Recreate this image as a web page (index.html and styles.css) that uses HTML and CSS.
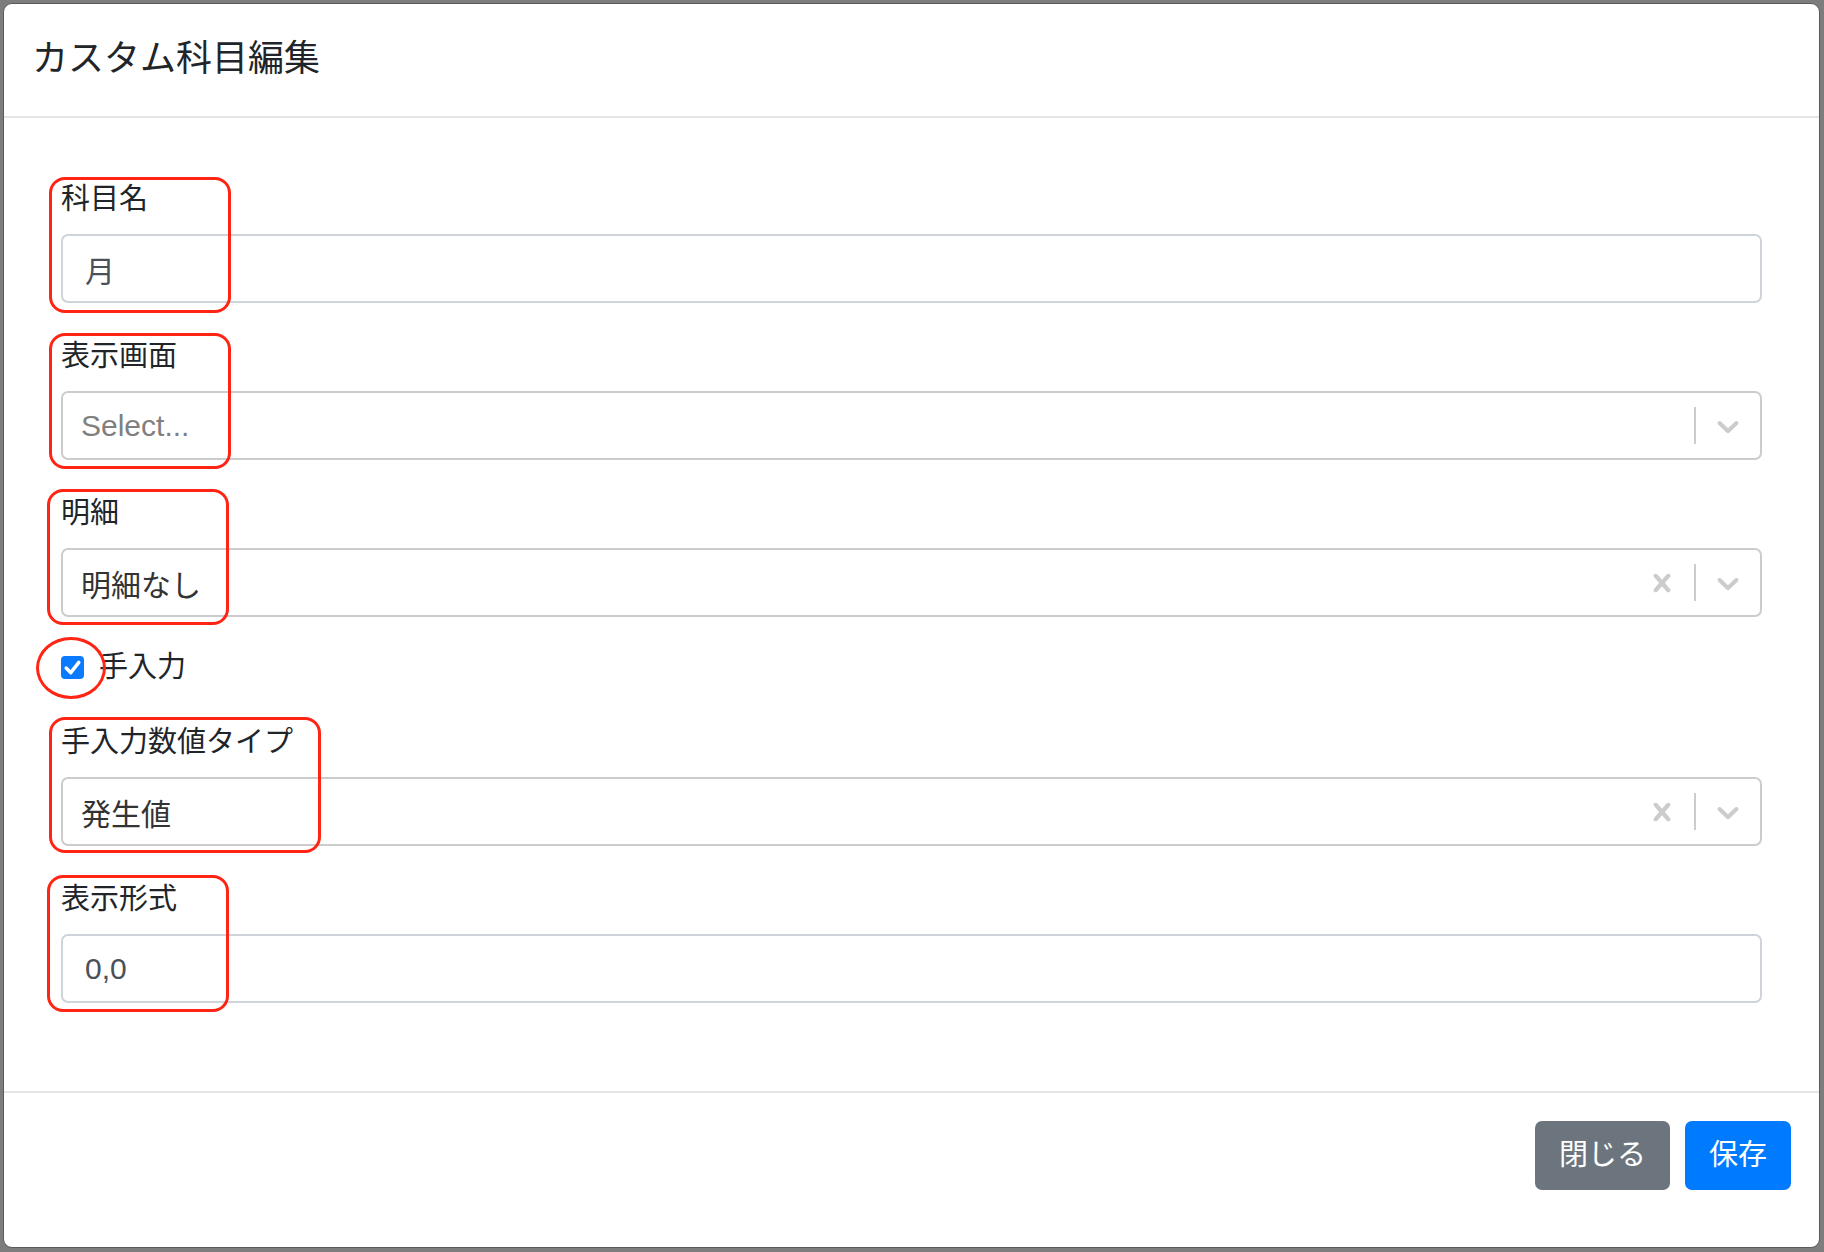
FILE: index.html
```html
<!DOCTYPE html>
<html lang="ja">
<head>
    <meta charset="UTF-8" />
    <title>カスタム科目編集</title>
    <link rel="stylesheet" href="styles.css">
</head>
<body>
<div class="modal">
    <div class="modal-header">
        <h5 class="modal-title">カスタム科目編集</h5>
    </div>

    <div class="modal-body">
        <div class="form-group">
            <label class="form-label">科目名</label>
            <div class="form-control">月</div>
        </div>

        <div class="form-group">
            <label class="form-label">表示画面</label>
            <div class="select-control">
                <div class="select-value placeholder">Select...</div>
                <div class="select-indicators">
                    <span class="select-separator"></span>
                    <span class="select-indicator">
                        <svg viewBox="0 0 20 20"><path d="M4.516 7.548c0.436-0.446 1.043-0.481 1.576 0l3.908 3.747 3.908-3.747c0.533-0.481 1.141-0.446 1.574 0 0.436 0.445 0.408 1.197 0 1.615-0.406 0.418-4.695 4.502-4.695 4.502-0.217 0.223-0.502 0.335-0.787 0.335s-0.57-0.112-0.789-0.335c0 0-4.287-4.084-4.695-4.502s-0.436-1.17 0-1.615z"/></svg>
                    </span>
                </div>
            </div>
        </div>

        <div class="form-group">
            <label class="form-label">明細</label>
            <div class="select-control">
                <div class="select-value">明細なし</div>
                <div class="select-indicators">
                    <span class="select-indicator">
                        <svg viewBox="0 0 20 20"><path d="M14.348 14.849c-0.469 0.469-1.229 0.469-1.697 0l-2.651-3.030-2.651 3.029c-0.469 0.469-1.229 0.469-1.697 0-0.469-0.469-0.469-1.229 0-1.697l2.758-3.15-2.759-3.152c-0.469-0.469-0.469-1.228 0-1.697s1.228-0.469 1.697 0l2.652 3.031 2.651-3.031c0.469-0.469 1.228-0.469 1.697 0s0.469 1.229 0 1.697l-2.758 3.152 2.758 3.150c0.469 0.469 0.469 1.229 0 1.698z"/></svg>
                    </span>
                    <span class="select-separator"></span>
                    <span class="select-indicator">
                        <svg viewBox="0 0 20 20"><path d="M4.516 7.548c0.436-0.446 1.043-0.481 1.576 0l3.908 3.747 3.908-3.747c0.533-0.481 1.141-0.446 1.574 0 0.436 0.445 0.408 1.197 0 1.615-0.406 0.418-4.695 4.502-4.695 4.502-0.217 0.223-0.502 0.335-0.787 0.335s-0.57-0.112-0.789-0.335c0 0-4.287-4.084-4.695-4.502s-0.436-1.17 0-1.615z"/></svg>
                    </span>
                </div>
            </div>
        </div>

        <div class="form-check">
            <span class="check-box">
                <svg viewBox="0 0 20 20"><path d="M4.5 10.5 L8.5 14.5 L15.5 5.5" /></svg>
            </span>
            <label class="check-label">手入力</label>
        </div>

        <div class="form-group">
            <label class="form-label">手入力数値タイプ</label>
            <div class="select-control">
                <div class="select-value">発生値</div>
                <div class="select-indicators">
                    <span class="select-indicator">
                        <svg viewBox="0 0 20 20"><path d="M14.348 14.849c-0.469 0.469-1.229 0.469-1.697 0l-2.651-3.030-2.651 3.029c-0.469 0.469-1.229 0.469-1.697 0-0.469-0.469-0.469-1.229 0-1.697l2.758-3.15-2.759-3.152c-0.469-0.469-0.469-1.228 0-1.697s1.228-0.469 1.697 0l2.652 3.031 2.651-3.031c0.469-0.469 1.228-0.469 1.697 0s0.469 1.229 0 1.697l-2.758 3.152 2.758 3.150c0.469 0.469 0.469 1.229 0 1.698z"/></svg>
                    </span>
                    <span class="select-separator"></span>
                    <span class="select-indicator">
                        <svg viewBox="0 0 20 20"><path d="M4.516 7.548c0.436-0.446 1.043-0.481 1.576 0l3.908 3.747 3.908-3.747c0.533-0.481 1.141-0.446 1.574 0 0.436 0.445 0.408 1.197 0 1.615-0.406 0.418-4.695 4.502-4.695 4.502-0.217 0.223-0.502 0.335-0.787 0.335s-0.57-0.112-0.789-0.335c0 0-4.287-4.084-4.695-4.502s-0.436-1.17 0-1.615z"/></svg>
                    </span>
                </div>
            </div>
        </div>

        <div class="form-group">
            <label class="form-label">表示形式</label>
            <div class="form-control">0,0</div>
        </div>
    </div>

    <div class="modal-footer">
        <button class="btn btn-secondary">閉じる</button>
        <button class="btn btn-primary">保存</button>
    </div>

    <!-- red annotation marks drawn over the form -->
    <div class="mark mark-name"></div>
    <div class="mark mark-screen"></div>
    <div class="mark mark-detail"></div>
    <div class="mark mark-check"></div>
    <div class="mark mark-type"></div>
    <div class="mark mark-format"></div>
</div>
</body>
</html>
```

FILE: styles.css
```css
* {
    box-sizing: border-box;
}

html, body {
    height: 100%;
}

body {
    margin: 0;
    padding: 3px 4px 4px 3px;
    background: #7d7d7d;
    font-family: "Liberation Sans", "Noto Sans CJK JP", sans-serif;
    color: #212529;
    display: flex;
}

.modal {
    position: relative;
    flex: 1;
    display: flex;
    flex-direction: column;
    background: #fff;
    border: 1px solid #5a5a5a;
    border-radius: 9px;
}

.modal-header {
    padding: 28px 28px 30px;
    border-bottom: 2px solid #e3e6e9;
}

.modal-title {
    margin: 0;
    font-size: 36px;
    font-weight: 400;
    line-height: 54px;
}

.modal-body {
    padding: 59px 57px 57px;
}

.form-group {
    margin-bottom: 31px;
}

.form-label {
    display: block;
    font-size: 29px;
    line-height: 44px;
    margin-bottom: 13px;
}

.form-control {
    height: 69px;
    border: 2px solid #ced4da;
    border-radius: 7px;
    padding: 0 22px;
    display: flex;
    align-items: center;
    font-size: 30px;
    color: #495057;
}

.select-control {
    height: 69px;
    border: 2px solid #cccccc;
    border-radius: 7px;
    display: flex;
    align-items: center;
}

.select-value {
    flex: 1;
    padding: 0 18px;
    font-size: 30px;
    color: #333;
}

.select-value.placeholder {
    color: #808080;
}

.select-indicators {
    display: flex;
    align-items: center;
    align-self: stretch;
}

.select-separator {
    width: 2px;
    align-self: stretch;
    margin: 14px 0;
    background: #cccccc;
}

.select-indicator {
    display: flex;
    padding: 14px;
}

.select-indicator svg {
    width: 36px;
    height: 36px;
    fill: #cccccc;
}

.form-check {
    display: flex;
    align-items: center;
    height: 44px;
    margin-top: -3px;
    margin-bottom: 31px;
}

.check-box {
    width: 23px;
    height: 23px;
    border-radius: 4px;
    background: #0a7bff;
    display: flex;
    margin-right: 15px;
}

.check-box svg {
    width: 100%;
    height: 100%;
    fill: none;
    stroke: #fff;
    stroke-width: 3;
    stroke-linecap: round;
    stroke-linejoin: round;
}

.check-label {
    font-size: 29px;
    line-height: 44px;
}

.modal-footer {
    flex: 1;
    display: flex;
    justify-content: flex-end;
    align-items: flex-start;
    gap: 15px;
    padding: 28px 28px;
    border-top: 2px solid #e3e6e9;
}

.btn {
    font-family: inherit;
    font-size: 29px;
    line-height: 43px;
    padding: 11px 22px;
    border: 2px solid transparent;
    border-radius: 7px;
    color: #fff;
}

.btn-secondary {
    background: #6c757d;
    border-color: #6c757d;
}

.btn-primary {
    background: #007bff;
    border-color: #007bff;
}

.mark {
    position: absolute;
    border: 3px solid #ff2414;
    border-radius: 16px;
    pointer-events: none;
}

.mark-name {
    left: 45px;
    top: 173px;
    width: 182px;
    height: 136px;
}

.mark-screen {
    left: 45px;
    top: 329px;
    width: 182px;
    height: 136px;
}

.mark-detail {
    left: 43px;
    top: 485px;
    width: 182px;
    height: 136px;
}

.mark-check {
    left: 32px;
    top: 633px;
    width: 70px;
    height: 62px;
    border-radius: 50%;
}

.mark-type {
    left: 45px;
    top: 713px;
    width: 272px;
    height: 136px;
}

.mark-format {
    left: 43px;
    top: 871px;
    width: 182px;
    height: 137px;
}
```
